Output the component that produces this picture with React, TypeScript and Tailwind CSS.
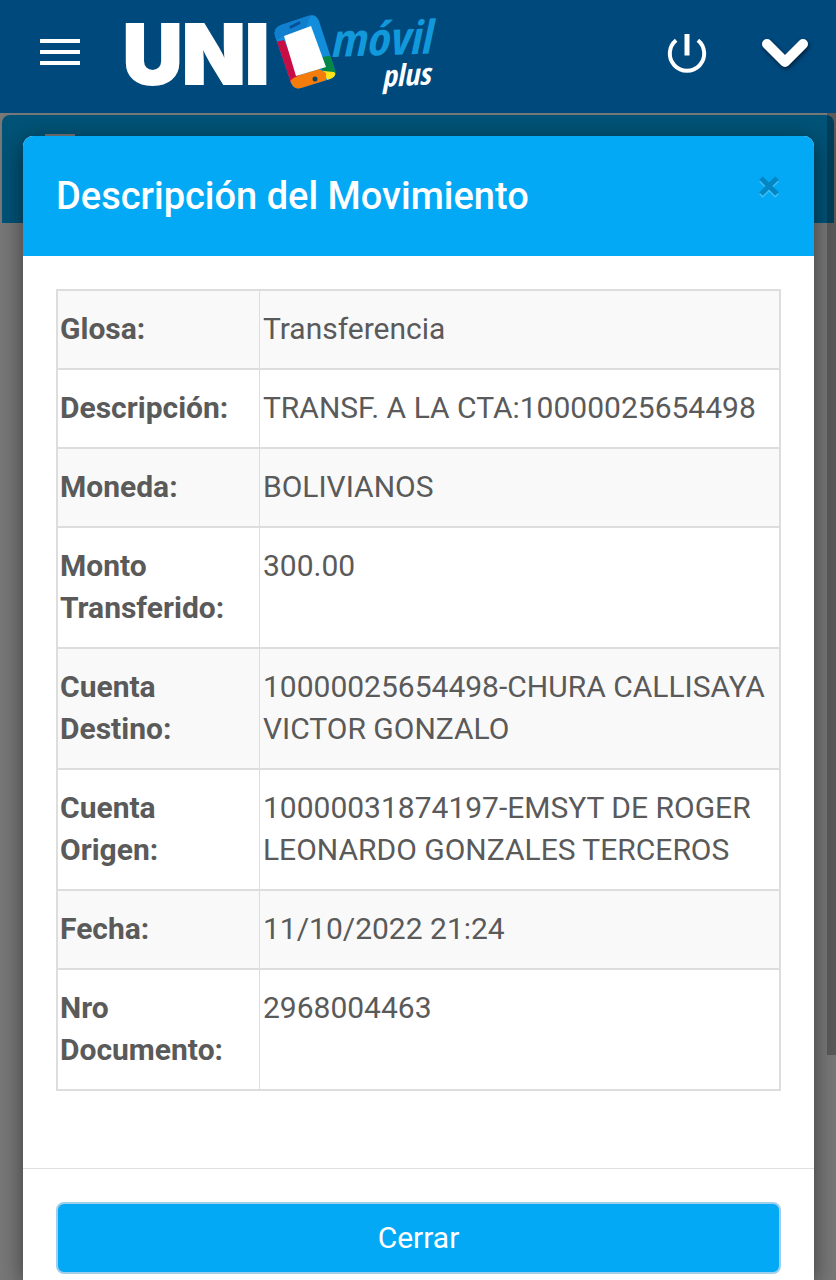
const rows: { label: string; value: string }[] = [
  { label: "Glosa:", value: "Transferencia" },
  { label: "Descripción:", value: "TRANSF. A LA CTA:10000025654498" },
  { label: "Moneda:", value: "BOLIVIANOS" },
  { label: "Monto Transferido:", value: "300.00" },
  { label: "Cuenta Destino:", value: "10000025654498-CHURA CALLISAYA VICTOR GONZALO" },
  { label: "Cuenta Origen:", value: "10000031874197-EMSYT DE ROGER LEONARDO GONZALES TERCEROS" },
  { label: "Fecha:", value: "11/10/2022 21:24" },
  { label: "Nro Documento:", value: "2968004463" },
];

function Logo() {
  return (
    <svg width="328" height="112" viewBox="120 0 328 112" role="img" aria-label="UNI móvil plus">
      <text x="123" y="84" fontSize="82" fontWeight="900" fill="#fff" stroke="#fff" strokeWidth="2" fontFamily="Inter, sans-serif">UNI</text>
      <defs>
        <clipPath id="phone">
          <path d="M281 25 L308 16 Q316 13 319 21 L335 70 Q337 77 330 79 L301 88 Q294 90 291 83 L275 36 Q273 28 281 25Z" />
        </clipPath>
      </defs>
      <g clipPath="url(#phone)">
        <path d="M270 10H340V95H270Z" fill="#118ddc" />
        <path d="M270 10H312L306 28L284 36L270 43Z" fill="#0f7fce" />
        <path d="M270 43L284 40L300 77L290 88Z" fill="#c70d43" />
        <path d="M322 57L340 54V77L322 70Z" fill="#078747" />
        <path d="M323 71L334 72L338 76L328 82Z" fill="#ffe31a" />
        <path d="M290 81Q294 77 300 75L319 69L326 73L326 82L296 93Z" fill="#f47c0b" />
      </g>
      <path d="M284 36L311 26L326 67L296 76Z" fill="#fff" />
      <path d="M291 27L299 23" stroke="#075197" strokeWidth="3" strokeLinecap="round" />
      <circle cx="315" cy="79" r="2.5" fill="#174263" />
      <text x="330" y="57" fontSize="46" fontWeight="700" fontStyle="italic" fill="#1299dc" fontFamily="'Liberation Sans Narrow', 'Open Sans Condensed', Lato, sans-serif" transform="rotate(-2 330 57)">móvil</text>
      <text x="382" y="87" fontSize="30" fontWeight="700" fontStyle="italic" fill="#fff" fontFamily="'Liberation Sans Narrow', 'Open Sans Condensed', Lato, sans-serif" transform="rotate(-3 382 87)">plus</text>
    </svg>
  );
}

function Header() {
  return (
    <header className="flex h-[113px] shrink-0 items-start bg-[#00497d] pr-[26px] pl-9">
      <button type="button" aria-label="Menú" className="mt-[28px] mr-9 flex size-12 items-center justify-center">
        <svg width="48" height="48" viewBox="0 0 48 48" fill="none" stroke="#fff" strokeWidth="4">
          <path d="M4 13H44M4 24H44M4 35H44" />
        </svg>
      </button>
      <Logo />
      <div className="ml-auto flex items-center gap-[50px] pt-[28px]">
        <button type="button" aria-label="Cerrar sesión">
          <svg width="48" height="48" viewBox="0 0 48 48" fill="none" stroke="#fff" strokeWidth="4">
            <path d="M14.1 12.2A17.2 17.2 0 1 0 35.9 12.2" />
            <path d="M25 6V27.500" strokeWidth="5" />
          </svg>
        </button>
        <button type="button" aria-label="Desplegar" className="drop-shadow-[1px_2px_2px_#001d3a]">
          <svg width="50" height="48" viewBox="0 0 50 48" fill="none" stroke="#fff" strokeWidth="10" strokeLinecap="round" strokeLinejoin="round">
            <path d="M7 16L25 34L43 16" />
          </svg>
        </button>
      </div>
    </header>
  );
}

export default function App() {
  return (
    <div className="flex min-h-screen flex-col bg-[#787878] font-[Roboto,sans-serif] text-[#5a5a5a]">
      <Header />
      <main className="relative flex grow flex-col pt-[23px] pr-[22px] pl-[23px]">
        <div aria-hidden="true" className="absolute inset-0 overflow-hidden px-[2px] pt-[2px]">
          <div className="h-[108px] rounded-t-lg bg-[#005377] pt-[19px] pl-[43px]">
            <div className="h-5 w-[30px] bg-[#777]" />
          </div>
          <div className="absolute top-0 right-0 h-[942px] w-[9px] bg-black/25" />
        </div>
        <section
          role="dialog"
          aria-labelledby="dialog-title"
          className="relative flex grow flex-col rounded-t-[10px] bg-white shadow-[0_6px_24px_rgba(0,0,0,0.5)]"
        >
          <div className="flex items-start justify-between rounded-t-[10px] bg-[#04a9f5] px-[33px] py-[34px]">
            <h1 id="dialog-title" className="text-[38px] leading-[52px] font-medium text-white">
              Descripción del Movimiento
            </h1>
            <button type="button" aria-label="Cerrar ventana" className="mt-1">
              <svg width="24" height="26" viewBox="0 0 24 26" fill="none" strokeWidth="5">
                <path d="M4 6L20 22M20 6L4 22" stroke="#43bdf5" />
                <path d="M4 4L20 20M20 4L4 20" stroke="#0387c4" />
              </svg>
            </button>
          </div>
          <div className="grow border-b border-[#e0e0e0] px-[33px] pt-[33px] pb-[75px]">
            <table className="w-full border-collapse border-2 border-[#ddd] text-[30px] leading-[42px]">
              <tbody>
                {rows.map((row) => (
                  <tr key={row.label} className="border-2 border-[#ddd] odd:bg-[#f9f9f9]">
                    <th scope="row" className="w-[28%] border-r border-[#ddd] px-[2px] pt-[17px] pb-[18px] text-left align-top font-bold">
                      {row.label}
                    </th>
                    <td className="px-[3px] pt-[17px] pb-[18px] align-top">{row.value}</td>
                  </tr>
                ))}
              </tbody>
            </table>
          </div>
          <div className="px-[33px] pt-[33px] pb-[6px]">
            <button type="button" className="h-[72px] w-full rounded-lg border-2 border-[#9fcfea] bg-[#04a9f5] text-[30px] leading-[42px] text-white">
              Cerrar
            </button>
          </div>
        </section>
      </main>
    </div>
  );
}
